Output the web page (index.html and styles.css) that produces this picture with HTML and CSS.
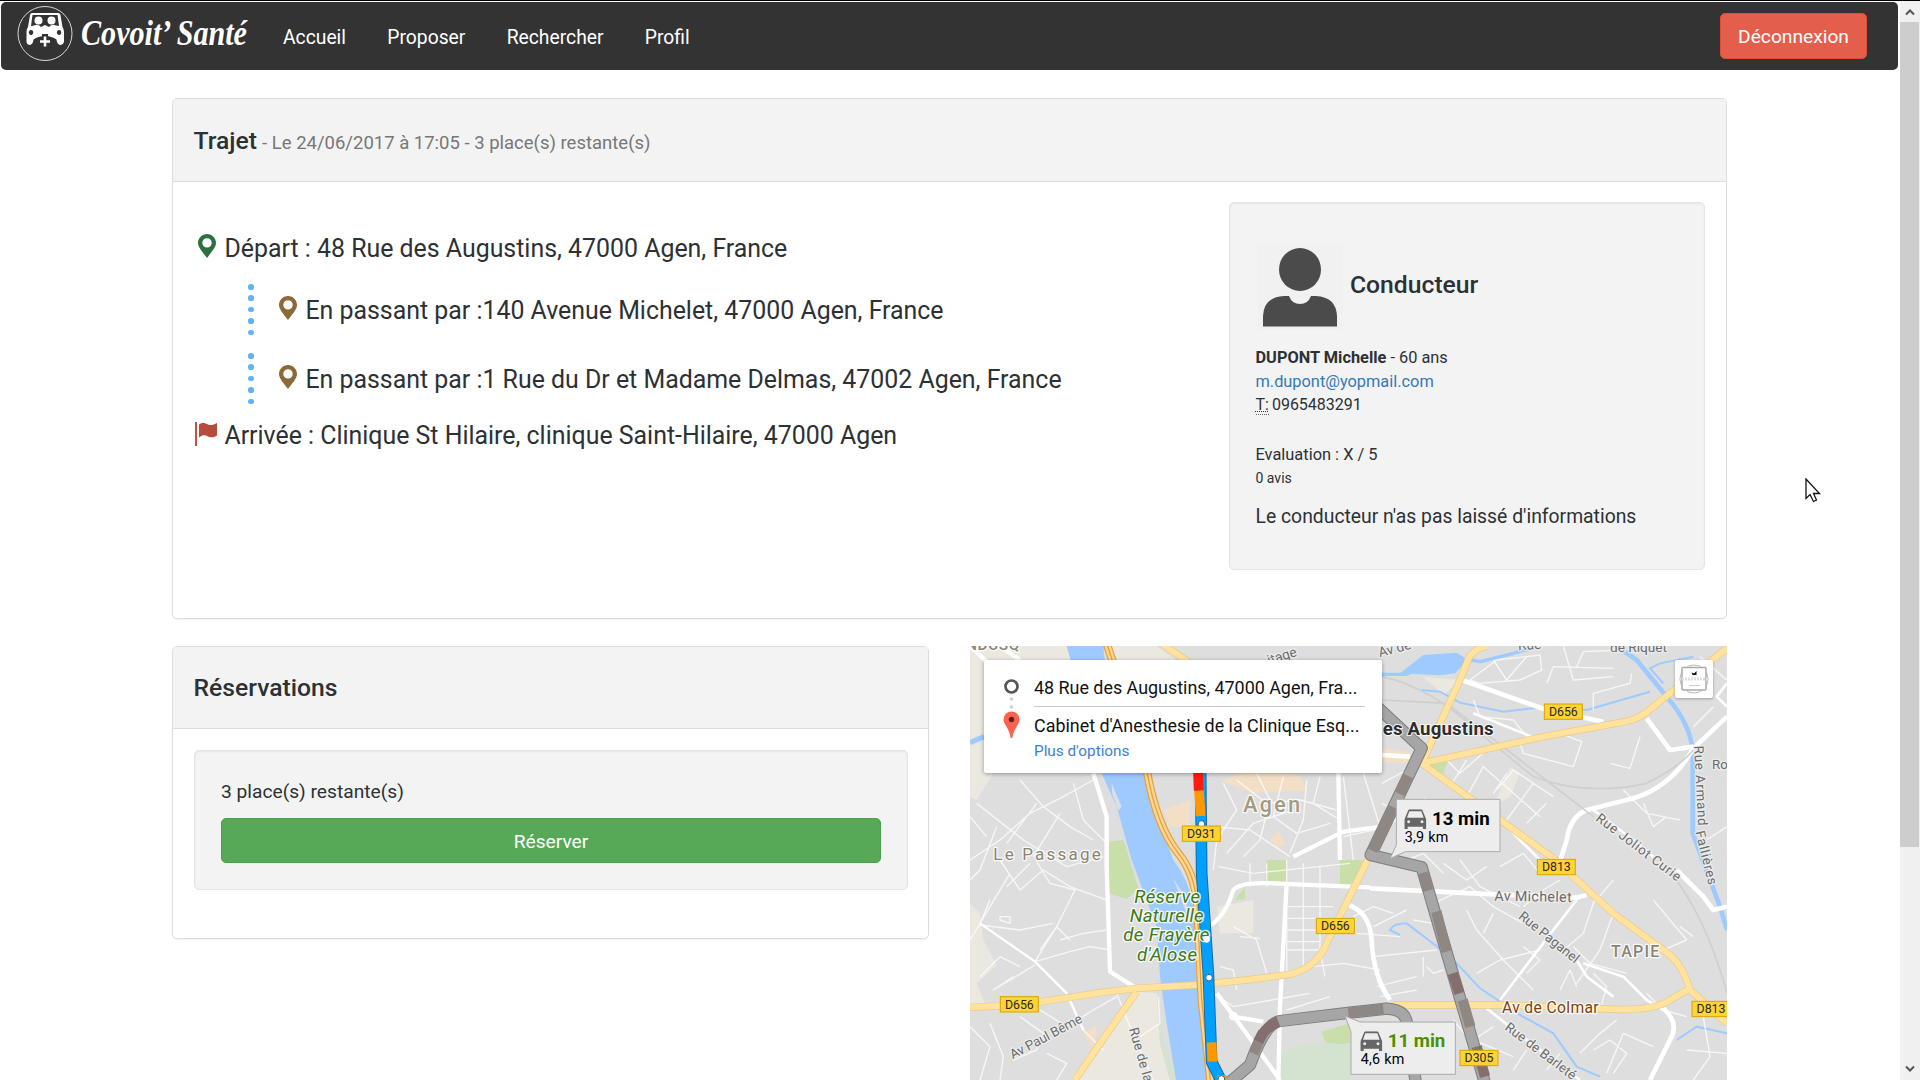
FILE: index.html
```html
<!DOCTYPE html>
<html lang="fr">
<head>
<meta charset="utf-8">
<title>Covoit' Santé</title>
<link rel="stylesheet" href="styles.css">
</head>
<body>
<svg class="defs" width="0" height="0">
  <symbol id="pin" viewBox="0 0 18 24"><path fill="currentColor" fill-rule="evenodd" d="M9 0C4 0 0 4 0 9c0 4.500 5 9.500 9 15 4-5.500 9-10.500 9-15 0-5-4-9-9-9zm0 4.200a4.700 4.700 0 1 1 0 9.400 4.700 4.700 0 0 1 0-9.400z"/></symbol>
  <symbol id="car" viewBox="0 0 66 60"><path fill="currentColor" fill-rule="evenodd" d="M12 2Q13 0 16 0H50Q53 0 54 2L64 26Q66 29 66 33V59H56V52H10V59H0V33Q0 29 2 26ZM15 6L8 25H58L51 6ZM13 33a4.500 4.500 0 1 0 .1 0ZM53 33a4.500 4.500 0 1 0 .1 0Z"/></symbol>
</svg>
<div class="window">
  <div class="page">
    <nav class="navbar">
      <svg class="brand" viewBox="0 0 250 68" width="250" height="68">
        <circle cx="44" cy="31.500" r="27" fill="none" stroke="#d8d8d8"/>
        <path fill="#fff" fill-rule="evenodd" d="M31 11H57Q59 11 59.500 13L61.500 25Q63 27 63 30V40Q62 43 59 43Q56 42 55.500 37.500Q51 34 44 34Q37 34 32.500 37.500Q32 42 29 43Q26 43 25.500 40V30Q25.500 27 27 25L29 13Q29.500 11 31 11ZM31.500 13L30 24Q31 24 33 23.500Q37 21.500 40 25L44 23L48 25Q51 21.500 55 23.500L58 24L56.500 13ZM30 28a2.200 2.500 0 1 0 .1 0ZM58 28a2.200 2.500 0 1 0 .1 0Z"/>
        <circle cx="37.500" cy="18.500" r="4" fill="#fff"/><circle cx="50.500" cy="18.500" r="4" fill="#fff"/>
        <path stroke="#333" stroke-width="6" d="M44 32V45M38 39.500H50"/>
        <path stroke="#fff" stroke-width="2.600" d="M44 34.500V44.500M39 39.500H49"/>
        <text x="80" y="43" class="brand-name" textLength="166" lengthAdjust="spacingAndGlyphs">Covoit’ Santé</text>
      </svg>
      <ul class="menu"><li>Accueil</li><li>Proposer</li><li>Rechercher</li><li>Profil</li></ul>
      <button class="btn logout">Déconnexion</button>
    </nav>
    <main class="container">
      <section class="panel trip">
        <header class="panel-heading"><h1>Trajet <small>- Le 24/06/2017 à 17:05 - 3 place(s) restante(s)</small></h1></header>
        <div class="trip-body">
          <div class="steps">
            <div class="step start"><svg class="pin"><use href="#pin"/></svg><span>Départ : 48 Rue des Augustins, 47000 Agen, France</span></div>
            <div class="step via"><span class="dots"><i></i><i></i><i></i><i></i><i></i></span><svg class="pin"><use href="#pin"/></svg><span>En passant par :140 Avenue Michelet, 47000 Agen, France</span></div>
            <div class="step via"><span class="dots"><i></i><i></i><i></i><i></i><i></i></span><svg class="pin"><use href="#pin"/></svg><span>En passant par :1 Rue du Dr et Madame Delmas, 47002 Agen, France</span></div>
            <div class="step end"><svg class="flag" viewBox="0 0 22 24"><path fill="#c0504d" d="M0 0H2V24H0Z"/><path fill="#b84c3c" d="M4 2.500C8 0 10 1 13 2.500S19 2.500 22 1V13.500C19 15.500 16 16 13 14.500S8 12.500 4 15.500Z"/></svg><span>Arrivée : Clinique St Hilaire, clinique Saint-Hilaire, 47000 Agen</span></div>
          </div>
          <aside class="well driver">
            <div class="driver-head">
              <svg class="avatar" viewBox="0 0 86 86"><rect width="86" height="86" fill="#f1f1f1"/><ellipse cx="43" cy="25.500" rx="21" ry="21.500" fill="#4b4b4b"/><path fill="#4b4b4b" d="M6 82.500V72Q7 53 27 52H32Q35 60 43 60Q51 60 54 52H59Q79 53 80 72V82.500Z"/></svg>
              <h2>Conducteur</h2>
            </div>
            <address><strong>DUPONT Michelle</strong> - 60 ans<br><a>m.dupont@yopmail.com</a><br><span class="phone"><abbr>T:</abbr> 0965483291</span></address>
            <p class="rating">Evaluation : X / 5</p>
            <p class="reviews">0 avis</p>
            <p class="note">Le conducteur n'as pas laissé d'informations</p>
          </aside>
        </div>
      </section>
      <div class="row">
        <section class="panel booking">
          <header class="panel-heading"><h1>Réservations</h1></header>
          <div class="well seats"><p>3 place(s) restante(s)</p><button class="btn reserve">Réserver</button></div>
        </section>
        <section class="map">
          <svg class="tiles" viewBox="30 18 2271 1302" preserveAspectRatio="none">
            <rect x="30" y="18" width="2271" height="1302" fill="#dedede"/>
            <g fill="#ebe8e0">
              <path d="M30 18H330L420 180 300 300 140 330 100 400 50 480 30 470ZM430 18H590L740 130 560 200Z"/>
              <path d="M30 790L60 820 70 900 110 975 50 1030 75 1090 30 1110ZM530 1055L590 1060 600 1210 630 1320H340L410 1225Z"/>
              <path d="M770 800L880 780V880H780ZM1600 500L1650 380 1680 400 1650 470ZM1390 110L1500 120 1450 165Z"/>
            </g>
            <g fill="#f3dfc5"><path d="M790 420L900 380 1020 410 1040 450 880 460 800 430ZM1266 325L1350 335V370L1266 365ZM610 510L690 480V560H630ZM930 600L955 575 975 615 950 625ZM370 1180L410 1155 400 1230Z"/></g>
            <g fill="#c9dfa9"><path d="M447 605L490 600 535 745 500 778 447 760ZM920 660H978V725H915ZM1140 660H1208L1195 735H1140ZM825 780L855 740V778ZM1405 378L1467 352 1448 405ZM1085 1175L1170 1150V1210L1100 1218Z"/><path fill="#d4e3cf" d="M960 1235L1075 1205 1172 1215V1320H962ZM590 970L605 1180 648 1320H630L600 1210Z"/></g>
            <path fill="#9fcaff" d="M320 18H432C420 100 530 240 555 400L580 500 640 660Q690 725 700 800L712 1040 740 1320H648L620 1150 600 1010 590 860 515 660 470 500 425 400Z"/>
            <path fill="#d9dfe5" d="M455 430L485 500 475 512 456 460ZM640 715L675 770 690 850Z"/>
            <g fill="none" stroke="#9fcaff" stroke-width="10">
              <path stroke-width="16" d="M30 308L72 290"/><path d="M1266 103H1340Q1460 40 1560 65L1660 40 1740 18"/><path fill="#9fcaff" stroke="none" d="M1320 100L1390 45 1490 38 1525 60 1485 100 1440 106Z"/>
              <path stroke-width="14" d="M1970 18L2030 60 2120 170Q2190 250 2198 330V580L2280 800 2301 870"/>
              <path stroke-width="6" d="M1385 150L1440 155 1500 188 1630 215 1760 200 1880 210 2070 155M2110 130L2070 85 2100 70 2200 50M1320 885L1290 870Q1300 850 1340 850L1445 930 1490 970 1560 1045 1680 1125 1780 1180 1850 1280 1920 1310M2150 1200L2210 1160 2301 1180"/>
            </g>
            <g class="lanes">
              <path d="M30 660L120 600 210 520 310 470 400 420M50 490L190 600 320 680 430 650M110 560L60 690 30 720M180 420L250 500 330 560 400 600M230 490L140 610M300 520L220 650M150 700L60 850 30 900M120 660L180 750 250 690 330 740 440 780M230 665L270 730 345 750 290 860 225 965M140 740L210 670M90 780L60 850M60 855L180 870 280 850M120 840L150 850V830H120ZM225 965L330 935 390 920 450 930M60 1010L120 950 180 980M225 975L100 1050 160 1010M300 900L370 880 440 870M240 930L290 860 330 900M180 1130L250 1180 230 1230 160 1260M240 1110L320 1160 400 1110 470 1070M330 1080L370 1170 430 1230M30 1160L90 1220 60 1320M90 1150L130 1250 120 1320M260 1240L320 1270 290 1320M470 1060L510 1160 580 1320M540 1190L600 1150 595 1070M30 530L80 590M340 430L370 540 440 610"/>
              <path d="M790 430L830 510 770 600 760 690M830 420L920 490 1020 480 1130 510M890 400L930 480 900 600 850 650M970 410L940 530 1010 580 1110 550M1040 420L1030 540 990 640M1080 410L1060 490 1140 540M760 560L870 570 990 650M800 640L880 550 1000 510M775 680L880 700 1170 670M870 670V740M920 670V740M980 660V1000M1030 670V980M1080 680V960M980 800H1120M980 835H1130M980 870H1110M980 905H1080M980 930H1080L1095 1010M820 860L890 900 920 1000M780 980L820 990 830 1050M840 890L900 895M760 1060L820 1100 1050 1060M980 1110L1110 1070M980 1150L1090 1130M1060 980L1150 970 1260 990M1180 830L1240 800 1300 820M1190 880L1320 890M1240 860L1340 810M1240 950L1430 930M1250 1040L1370 1010M1260 1070L1370 1050"/>
              <path d="M1530 120L1610 60 1740 45 1745 90 1680 120 1560 130ZM1600 60L1640 120 1700 50M1810 18L1840 120 1960 110M1760 130L1780 80 1960 85M1900 210V160L2010 130 2015 100M1850 80L1870 35 1990 30M1540 180L1560 230 1660 240 1700 290M1680 310L1690 340 1840 380 1865 305 1800 280M1950 370L2010 385 2040 290M1450 350L1500 400 1580 330M1470 440L1520 360M1520 470L1570 380 1740 530M1610 450L1660 390 1780 470M1640 540L1720 430M1700 550L1760 490M1640 400L1600 460M1990 450L2060 520 2160 540M2050 490L2080 560 2120 530M2240 600L2301 560M2220 50L2300 120M2260 200L2200 260M1430 510L1400 570M1266 430L1340 390M1266 490L1320 520M1150 410L1180 660M1210 400L1260 560M1150 590L1290 560M1340 660L1390 640 1450 700M1450 670L1520 720 1580 680M1500 660L1560 740 1680 800M1620 680L1690 640 1740 700"/>
              <path d="M1390 760L1420 850 1360 840M1420 790L1530 740 1600 800 1690 850M1520 810L1550 870 1630 960 1720 1050M1600 820L1570 880M1690 800L1750 750 1800 720M1960 820L1920 930 1850 1030M1910 760L1870 880 1800 940M1960 720L1900 790M2080 780L2180 900 2110 930M2160 860L2200 890M1550 1000L1620 960 1740 930M1690 920L1740 960 1700 1000M1900 1000L1940 1040 1920 1110M2060 1060L2110 1110 2180 1130M1840 920L1890 970 2000 1000M1800 1050L1830 990 1850 1040M1900 1230L1950 1200 2000 1240 1960 1300M1940 1300L1990 1180 2080 1220M1860 1240L1920 1180 1970 1140M1600 1160L1540 1200 1660 1250M1700 1230L1660 1290M1760 1290L1800 1240M2230 1130L2250 1250 2200 1320M2180 1230L2301 1240M1480 1140L1520 1190M1400 980L1420 1000 1450 990M1390 950V1010"/>
            </g>
            <g class="roads">
              <path d="M120 18L180 60M30 18L80 65M400 400L440 530 440 680 450 995 530 1045" stroke-width="13"/>
              <path d="M60 850L225 965 320 1060 370 1170" stroke-width="7"/>
              <path d="M720 870Q790 850 820 750 840 725 940 730L1230 742M980 730L960 1100 955 1320M770 1060L830 1140 960 1320M820 1130L910 1145M1135 400L1140 660M1266 560L1150 575 1000 650" stroke-width="13"/>
              <path d="M1230 745L1540 760 1850 773 1880 765M1150 790Q1230 810 1235 900 1240 1010 1290 1080M1266 345L1350 350M1266 560L1400 480M1505 120L1760 210 1930 245M2060 235L2130 330 2200 320M2301 230L2200 325Q2130 450 2000 480L1880 510Q1830 530 1820 600L1795 680M2301 800L2260 810 2230 770 2150 690M2110 1105Q2160 1150 2130 1200L2070 1320" stroke-width="14"/>
              <path d="M1540 220L1740 300M1850 960L1880 1010 1960 1070M1870 970L1990 1010 2060 1080 2110 1110M1580 1105L1700 1200 1860 1320M1900 510L2020 600 2080 650M1640 560L1740 660M1620 1080L1780 870 1850 780M2301 130L2270 170 2301 200" stroke-width="8"/>
              <circle cx="820" cy="1128" r="10" stroke-width="6"/>
            </g>
            <path d="M1266 110Q1410 140 1560 280L1720 410Q1880 470 2060 430 2160 380 2200 330M1266 180L1460 190 1900 530M2120 680Q2240 830 2301 1060" fill="none" stroke="#cfcfcf" stroke-width="5"/>
            <g class="main-road edge"><path d="M30 1102L180 1095 420 1058 530 1045 720 1034 860 1020 990 1003Q1060 985 1090 930L1225 655"/><path d="M530 1055L410 1225 345 1320M1580 18Q1530 30 1520 70L1500 120 1385 370M1385 370L1750 290 1980 248Q2040 240 2080 200L2301 25M1385 370L1780 655 1840 710 1960 820 2130 945Q2170 980 2190 1050L2301 1150M1300 1095H1640L1940 1107Q2080 1115 2130 1080L2190 1045M590 0L690 70"/></g>
            <g class="main-road"><path d="M30 1102L180 1095 420 1058 530 1045 720 1034 860 1020 990 1003Q1060 985 1090 930L1225 655"/><path d="M530 1055L410 1225 345 1320M1580 18Q1530 30 1520 70L1500 120 1385 370M1385 370L1750 290 1980 248Q2040 240 2080 200L2301 25M1385 370L1780 655 1840 710 1960 820 2130 945Q2170 980 2190 1050L2301 1150M1300 1095H1640L1940 1107Q2080 1115 2130 1080L2190 1045M590 0L690 70"/></g>
            <g fill="none"><path stroke="#e6a13c" stroke-width="25" d="M440 10L460 70M560 390Q590 560 655 640 705 700 712 800L725 1080 752 1330"/><path stroke="#ffd694" stroke-width="18" d="M440 10L460 70M560 390Q590 560 655 640 705 700 712 800L725 1080 752 1330"/><path stroke="#e6a13c" stroke-width="4" d="M440 10L460 70M560 390Q590 560 655 640 705 700 712 800L725 1080 752 1330"/></g>
            <g fill="none" stroke-linejoin="round">
              <path stroke="#7d7d7d" stroke-width="37" d="M1240 190L1385 325 1232 645 1385 682 1575 1330M805 1330L870 1275Q915 1150 960 1143L1170 1118 1280 1106Q1345 1110 1340 1160L1368 1330"/>
              <path stroke="#a6a6a6" stroke-width="31" d="M1240 190L1385 325 1232 645 1385 682 1575 1330M805 1330L870 1275Q915 1150 960 1143L1170 1118 1280 1106Q1345 1110 1340 1160L1368 1330"/>
              <path stroke="#8f8782" stroke-width="31" d="M1345 408L1319 462M1300 502L1238 632M1390 698L1404 752M1429 815L1460 935M1508 1080L1531 1160M880 1240L910 1175M1165 1118L1270 1107"/>
              <path stroke="#856e6e" stroke-width="31" d="M1478 1000L1498 1060M1550 1220L1575 1310M895 1205Q915 1160 955 1145"/>
              <path stroke="#146cab" stroke-width="35" d="M722 400L725 700 745 1000 755 1266 785 1325"/>
              <path stroke="#00a0fc" stroke-width="29" d="M722 400L725 700 745 1000 755 1266 785 1325"/>
              <path stroke="#ff1c0c" stroke-width="29" d="M714 398L716 452"/><path stroke="#ff9800" stroke-width="29" d="M717 452L722 528M755 1207L757 1265M772 1320H800"/>
            </g>
            <g fill="#fff" stroke="#28659b" stroke-width="3"><circle cx="724" cy="552" r="10"/><circle cx="747" cy="1013" r="10"/><circle cx="784" cy="1317" r="10"/></g>
            <g class="place">
              <text x="18" y="31" font-size="46" textLength="160" class="district">NDUSQ</text>
              <text x="850" y="516" font-size="64" textLength="170" class="city">Agen</text>
              <text x="100" y="660" font-size="51" textLength="322">Le Passage</text>
              <text x="1953" y="952" font-size="48" textLength="145" class="district">TAPIE</text>
            </g>
            <g class="park"><text x="523" y="789" textLength="197">Réserve</text><text x="509" y="847" textLength="222">Naturelle</text><text x="490" y="904" textLength="258">de Frayère</text><text x="531" y="962" textLength="180">d'Alose</text></g>
            <circle cx="740" cy="898" r="10" fill="#fff"/>
            <text x="1268" y="286" class="poi" textLength="333">es Augustins</text>
            <g class="street">
              <text transform="translate(1259 52) rotate(-15)" font-size="41">Av de</text><text transform="translate(927 75) rotate(-18)" font-size="41">itage</text>
              <text transform="translate(1675 31) rotate(-4)" font-size="41">Rue</text><text transform="translate(1950 35)" font-size="41">de Riquet</text>
              <text x="2256" y="387">Ro</text>
              <text transform="translate(2202 318) rotate(87)" textLength="240">Rue Armand</text><text transform="translate(2206 576) rotate(76)" textLength="165">Fallières</text>
              <text transform="translate(1905 540) rotate(37)" textLength="308">Rue Joliot Curie</text>
              <text x="1603" y="782" transform="rotate(1 1603 784)" font-size="43" textLength="232">Av Michelet</text>
              <text transform="translate(1673 833) rotate(39)" textLength="220">Rue Paganel</text>
              <text transform="translate(1632 1167) rotate(37)" textLength="256">Rue de Barleté</text>
              <text transform="translate(158 1258) rotate(-28)" textLength="240">Av Paul Bême</text>
              <text transform="translate(507 1167) rotate(74)" textLength="168">Rue de la</text>
              <text x="1626" y="1120" font-size="47" class="avenue" textLength="290">Av de Colmar</text>
            </g>
            <g class="shields">
              <g transform="translate(667 558)"><rect/><text>D931</text></g><g transform="translate(1753 192)"><rect/><text>D656</text></g><g transform="translate(1732 658)"><rect/><text>D813</text></g><g transform="translate(1069 835)"><rect/><text>D656</text></g><g transform="translate(121 1070)"><rect/><text>D656</text></g><g transform="translate(2196 1084)"><rect/><text>D813</text></g><g transform="translate(1500 1231)"><rect/><text>D305</text></g>
            </g>
            <g class="callout">
              <path d="M1309 478H1620V635H1336L1290 656 1309 615Z"/><path d="M1155 1128L1200 1146H1486V1303H1173V1175Z"/>
              <use href="#car" x="1333" y="508" width="66" height="60" color="#666"/><use href="#car" x="1201" y="1174" width="66" height="60" color="#666"/>
              <text x="1416" y="554" class="time" textLength="173">13 min</text><text x="1334" y="606" font-size="43" textLength="131">3,9 km</text>
              <text x="1283" y="1221" class="time fast" textLength="173">11 min</text><text x="1202" y="1272" font-size="43" textLength="131">4,6 km</text>
            </g>
          </svg>
          <div class="route-card">
            <svg class="route-icons" width="20" height="66" viewBox="0 0 20 66"><circle cx="10.500" cy="8.500" r="6" fill="none" stroke="#555" stroke-width="2.700"/><circle cx="10.500" cy="21" r="1.800" fill="#d0d0d0"/><circle cx="10.500" cy="29" r="1.800" fill="#d0d0d0"/><path fill="#fb6350" d="M10.500 33.500a8 8 0 0 1 8 8c0 5-5.500 8-7.200 18.500h-1.600C8 49.500 2.500 46.500 2.500 41.500a8 8 0 0 1 8-8z"/><circle cx="10.500" cy="41.500" r="2.700" fill="#5b2220"/></svg>
            <div class="route-lines"><div class="route-from">48 Rue des Augustins, 47000 Agen, Fra...</div><div class="route-to">Cabinet d'Anesthesie de la Clinique Esq...</div><a>Plus d'options</a></div>
          </div>
          <div class="fullscreen"><svg viewBox="0 0 38 38" width="38" height="38"><circle cx="19" cy="19" r="14" fill="none" stroke="#bbb"/><rect x="7" y="7.500" width="24" height="22.500" rx="1" fill="#fff" stroke="#aaa" stroke-width="1.500"/><path fill="#111" d="M16.500 12.500L19 13.500 21.500 11V15H17.500Z"/><path stroke="#ddd" stroke-width="3" stroke-dasharray="2 1" d="M4 19H34"/><path stroke="#ccc" d="M14 25.500H25"/></svg></div>
        </section>
      </div>
    </main>
    <svg class="cursor" viewBox="0 0 16 26" width="16" height="26"><path fill="#fff" stroke="#111" stroke-width="1.300" d="M1 1V20.500L5 16.500 8.500 23.500 11.500 22 8.500 15.500H14.500Z"/></svg>
  </div>
  <div class="scrollbar"><svg viewBox="0 0 10 8" width="10" height="8"><path d="M1 6.500L5 2.500 9 6.500"/></svg><div class="thumb"></div><svg viewBox="0 0 10 8" width="10" height="8"><path d="M1 1.500L5 5.500 9 1.500"/></svg></div>
</div>
</body>
</html>
```
FILE: styles.css
```css
* { box-sizing: border-box; }
body { margin: 0; font-family: Roboto, "Liberation Sans", sans-serif; font-size: 19px; color: #2c3134; background: #fff; }
h1, h2, p, ul { margin: 0; padding: 0; }
.defs { position: absolute; }
.window { display: flex; height: 1080px; overflow: hidden; border-top: 1px solid #000; }
.page { flex: 1; padding: 1px 2px 0 1px; position: relative; }
.navbar { display: flex; align-items: center; height: 68px; background: #333; border-radius: 5px; }
.brand { flex: none; overflow: visible; }
.brand-name { font: italic bold 35px "Liberation Serif", serif; fill: #fff; }
.menu { display: flex; gap: 41.300px; margin-left: 32px; list-style: none; color: #fff; font-size: 19.300px; line-height: 24px; padding-top: 4px; }
.btn { border: 1px solid; border-radius: 5px; font: 19.200px Roboto, sans-serif; color: #fff; padding: 0; }
.logout { margin-left: auto; margin-right: 31px; width: 147px; height: 46px; margin-bottom: 1px; padding-top: 2px; background: #e45f4b; border-color: #e14d37; }
.container { width: 1555px; margin: 28px 0 0 171px; }
.panel { border: 1px solid #ddd; border-radius: 5px; box-shadow: 0 1px 1px rgba(0,0,0,.05); }
.panel-heading { height: 83px; padding: 25px 20.500px 0; background: #f3f3f3; border-bottom: 1px solid #ddd; border-radius: 4px 4px 0 0; }
.panel-heading h1 { font-size: 24.700px; line-height: 34px; font-weight: 500; }
.panel-heading small { font-size: 18.500px; font-weight: 400; color: #777; margin-left: -1px; }
.trip { height: 521px; }
.trip-body { display: flex; justify-content: space-between; padding: 20px 21px; }
.steps { padding-top: 28px; font-size: 24.900px; line-height: 38px; }
.step { display: flex; align-items: flex-start; white-space: nowrap; }
.start { height: 53px; padding-left: 4px; }
.pin { flex: none; width: 18px; height: 24px; margin: 4px 8.400px 0 0; }
.start .pin { color: #2f7040; }
.via { height: 69px; padding: 9px 0 0 54px; }
.via .pin { color: #8c6a38; }
.dots { display: flex; flex-direction: column; gap: 5.700px; width: 6px; margin: -10px 25px 0 0; padding-top: 2px; }
.dots i { width: 5.700px; height: 5.700px; border-radius: 50%; background: #5fb3f6; }
.end { padding-left: 1px; margin-top: -4px; }
.flag { width: 22px; height: 24px; margin: 5px 7.400px 0 0; }
.well { background: #f3f3f3; border: 1px solid #e3e3e3; border-radius: 5px; box-shadow: inset 0 1px 2px rgba(0,0,0,.05); }
.driver { width: 476px; height: 368px; padding: 41px 25.500px; }
.driver-head { display: flex; align-items: center; gap: 7px; height: 86px; }
.avatar { width: 86px; height: 86px; margin-left: 1.500px; }
.driver h2 { font-size: 24.700px; font-weight: 500; margin-top: -6px; }
address { font-style: normal; font-size: 16.350px; line-height: 23.500px; margin-top: 16px; }
address strong { font-weight: 700; }
.phone { font-size: 16px; }
a { color: #337ab7; }
abbr { text-decoration: underline dotted 1px; border-bottom: 1px dotted #666; margin-right: -1px; }
.rating { font-size: 16.400px; line-height: 24px; margin-top: 26px; }
.reviews { font-size: 14px; line-height: 22px; }
.note { font-size: 19.350px; line-height: 26px; margin-top: 15px; }
.row { display: flex; gap: 41px; margin-top: 27px; align-items: flex-start; }
.booking { width: 757px; height: 293px; }
.booking .panel-heading { height: 82px; padding-top: 24px; }
.seats { margin: 21px 20px 21px 21px; height: 140px; padding: 27px 26px; }
.seats p { font-size: 19.200px; line-height: 28px; margin-bottom: 12px; }
.reserve { width: 100%; height: 45px; display: block; background: #57a957; border-color: #4c9f4c; padding-top: 2px; }
.map { position: relative; width: 757px; height: 434px; overflow: hidden; }
.tiles { display: block; width: 757px; height: 434px; font-family: Roboto, sans-serif; }
.lanes, .roads { fill: none; stroke: #fff; stroke-linejoin: round; }
.lanes { stroke-width: 4.200px; opacity: .75; }
.main-road { fill: none; stroke: #ffe29d; stroke-width: 18; stroke-linejoin: round; }
.main-road.edge { stroke: #ecc983; stroke-width: 22; }
.place, .park, .poi, .street { paint-order: stroke; stroke: #fff; stroke-opacity: .85; stroke-width: 8; stroke-linejoin: round; }
.place { fill: #8c8472; }
.place .city { font-weight: 500; fill: #a39a80; }
.place .district { font-weight: 500; }
.park { font-size: 56px; font-style: italic; fill: #3f7a16; }
.poi { font-size: 56px; font-weight: 700; fill: #2e2e2e; stroke-width: 6; }
.street { font-size: 40px; fill: #6c6c6c; stroke: #eee; }
.street .avenue { fill: #7a4312; stroke: #fff; }
.shields rect { width: 114px; height: 46px; fill: #ffd236; stroke: #d7a400; stroke-width: 3; }
.shields text { transform: translate(57px, 36px); text-anchor: middle; font-size: 37px; fill: #2a2a20; }
.callout path { fill: #ededed; stroke: #aaa; stroke-width: 3; }
.callout .time { font-size: 56px; font-weight: 700; }
.callout .fast { fill: #4a9100; }
.route-card { position: absolute; left: 14px; top: 14px; width: 398px; height: 113px; background: #fff; border-radius: 2px; box-shadow: 0 1px 4px rgba(0,0,0,.35); display: flex; padding: 18px 17px 0; }
.route-icons { flex: none; margin-right: 13px; }
.route-lines { width: 331px; font-size: 17.900px; line-height: 24px; color: #111; white-space: nowrap; }
.route-from { height: 31px; border-bottom: 1px solid #ccc; margin-top: -2px; }
.route-to { margin-top: 7px; }
.route-lines a { display: block; font-size: 15.300px; line-height: 24px; color: #3a7fd0; margin-top: 1px; }
.fullscreen { position: absolute; left: 705px; top: 14px; width: 38px; height: 38px; background: #fff; border-radius: 2px; box-shadow: 0 1px 3px rgba(0,0,0,.3); }
.cursor { position: absolute; left: 1805px; top: 477px; }
.scrollbar { width: 20px; background: #f0f0f0; display: flex; flex-direction: column; align-items: center; padding: 7px 1px 7px 0; }
.scrollbar svg { flex: none; fill: none; stroke: #555; stroke-width: 2; }
.thumb { width: 19px; height: 825px; background: #cdcdcd; margin: 6px 0 auto; }
```
